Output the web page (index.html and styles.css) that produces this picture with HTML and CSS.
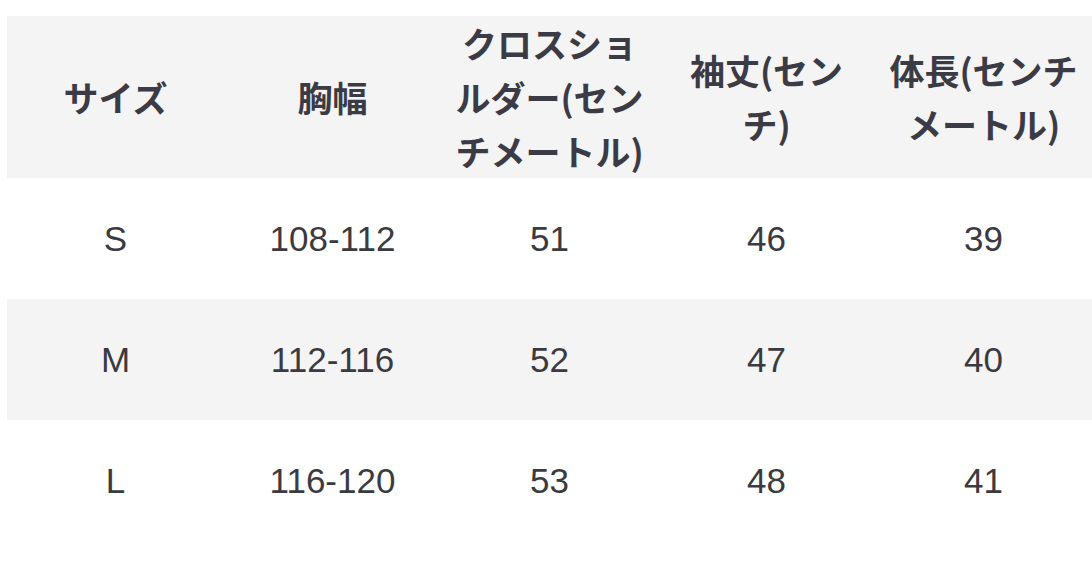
FILE: index.html
```html
<!DOCTYPE html>
<html lang="ja">
<head>
<meta charset="utf-8">
<link rel="stylesheet" href="styles.css">
</head>
<body>
<table class="size-table">
  <thead>
    <tr>
      <th>サイズ</th>
      <th>胸幅</th>
      <th>クロスショ<br>ルダー(セン<br>チメートル)</th>
      <th>袖丈(セン<br>チ)</th>
      <th>体長(センチ<br>メートル)</th>
    </tr>
  </thead>
  <tbody>
    <tr><td>S</td><td>108-112</td><td>51</td><td>46</td><td>39</td></tr>
    <tr class="alt"><td>M</td><td>112-116</td><td>52</td><td>47</td><td>40</td></tr>
    <tr><td>L</td><td>116-120</td><td>53</td><td>48</td><td>41</td></tr>
  </tbody>
</table>
</body>
</html>
```
FILE: styles.css
```css
html, body {
  margin: 0;
  background: #ffffff;
}
body {
  padding: 16px 0 0 7px;
  width: 1092px;
  overflow: hidden;
}
.size-table {
  border-collapse: collapse;
  table-layout: fixed;
  width: 1085px;
}
.size-table th,
.size-table td {
  width: 217px;
  text-align: center;
  vertical-align: middle;
}
.size-table th {
  background: #f4f4f4;
  color: #3b3b45;
  font-family: "Noto Sans CJK JP", "Liberation Sans", sans-serif;
  font-weight: 700;
  font-size: 35px;
  line-height: 54px;
  height: 162px;
  padding: 0;
  white-space: nowrap;
  box-sizing: border-box;
}
.size-table td {
  color: #3a3a40;
  font-family: "Liberation Sans", "Noto Sans", sans-serif;
  font-size: 35px;
  height: 121px;
  padding: 0;
}
.size-table tr.alt td {
  background: #f4f4f4;
}
```
